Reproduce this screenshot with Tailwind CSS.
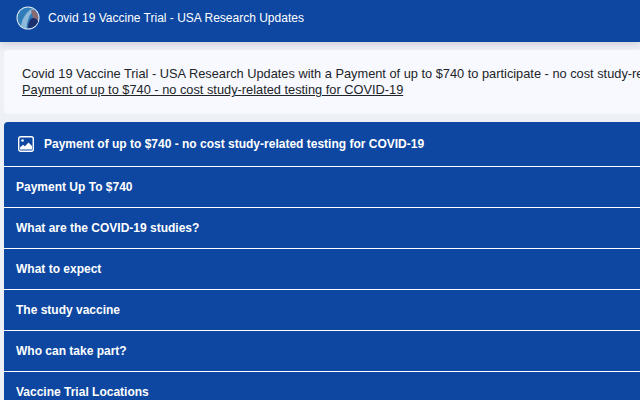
<!DOCTYPE html>
<html lang="en">
<head>
    <meta charset="UTF-8">
    <title>Covid 19 Vaccine Trial - USA Research Updates</title>
    <script src="https://cdn.jsdelivr.net/npm/@tailwindcss/browser@4"></script>
</head>
<body class="h-[400px] w-[640px] overflow-hidden bg-[#eef0f7] font-['Liberation_Sans',Arial,sans-serif]">
    <header class="flex h-[42px] items-center gap-[8px] bg-[#0d47a1] pb-[6px] pl-[16px] shadow-[0_2px_8px_rgba(0,0,0,0.15)]">
        <svg class="h-[24px] w-[24px] shrink-0" viewBox="0 0 24 24">
            <circle cx="12" cy="12" r="11.500" fill="#dfe8f2"/>
            <circle cx="12" cy="12" r="10.500" fill="#2f7db8"/>
            <path d="M5 20C6 13 10 6 16 2.500L18 4C14 8 11 14 10.500 22.300C8 22 6 21 5 20Z" fill="#8fb9d8"/>
            <path d="M15 4C17 3 21 6 22 10L22 15L17 12Z" fill="#8a6a70"/>
            <path d="M12 22C12 17 14 12 17 12C20 12 22 14 22 16C20 20 16 22.500 12 22Z" fill="#1c2f6e"/>
        </svg>
        <span class="text-[12px] leading-none text-white">Covid 19 Vaccine Trial - USA Research Updates</span>
    </header>

    <main class="pl-[4px] pt-[8px]">
        <section class="flex h-[64px] w-[700px] flex-col justify-center rounded-[4px] bg-[#f8f9fe] pl-[18px] text-[12.8px] leading-[16px] text-[#212529]">
            <p class="whitespace-nowrap">Covid 19 Vaccine Trial - USA Research Updates with a Payment of up to $740 to participate - no cost study-related testing</p>
            <a href="#" class="underline whitespace-nowrap">Payment of up to $740 - no cost study-related testing for COVID-19</a>
        </section>

        <nav class="mt-[8px] w-[700px] overflow-hidden rounded-t-[4px] bg-[#0d47a1] text-[12px] font-bold text-white">
            <div class="flex h-[45px] items-center gap-[10px] border-b border-white pl-[14px]">
                <svg class="h-[16px] w-[16px] shrink-0" viewBox="0 0 16 16" fill="none">
                    <rect x="0.700" y="0.700" width="14.600" height="14.600" rx="2" stroke="white" stroke-width="1.400"/>
                    <circle cx="4.500" cy="4.500" r="1.300" fill="white"/>
                    <path d="M2 13.500L2 11.500L5 8.800L7 10.300L10.500 6.500L14 10L14 13.500Z" fill="white"/>
                </svg>
                <span>Payment of up to $740 - no cost study-related testing for COVID-19</span>
            </div>
            <div class="flex h-[41px] items-center border-b border-white pl-[12px]">Payment Up To $740</div>
            <div class="flex h-[41px] items-center border-b border-white pl-[12px]">What are the COVID-19 studies?</div>
            <div class="flex h-[41px] items-center border-b border-white pl-[12px]">What to expect</div>
            <div class="flex h-[41px] items-center border-b border-white pl-[12px]">The study vaccine</div>
            <div class="flex h-[41px] items-center border-b border-white pl-[12px]">Who can take part?</div>
            <div class="flex h-[41px] items-center border-b border-white pl-[12px]">Vaccine Trial Locations</div>
        </nav>
    </main>
</body>
</html>
